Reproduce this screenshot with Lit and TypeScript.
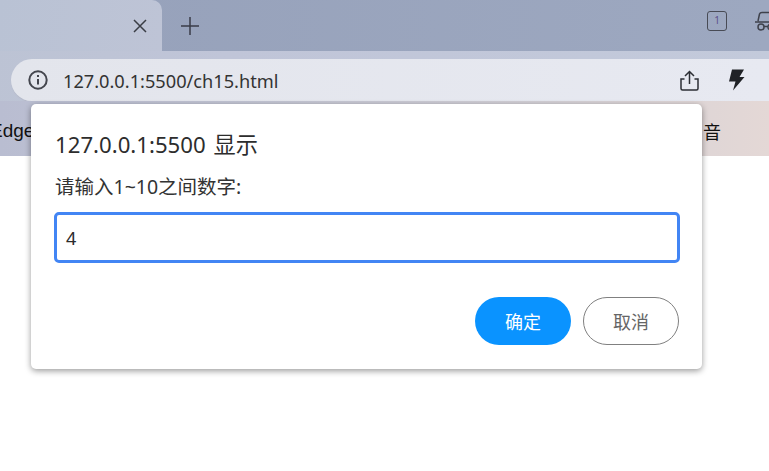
import { LitElement, html, css } from "lit";
import { customElement } from "lit/decorators.js";

@customElement("app-root")
export class AppRoot extends LitElement {
  static styles = css`
    :host {
      display: block;
      position: relative;
      width: 769px;
      height: 471px;
      overflow: hidden;
      background: #fff;
      font-family: "Noto Sans", "Noto Sans CJK SC", sans-serif;
      color: #2b2b2b;
    }
    .chrome {
      background: linear-gradient(100deg, #bcc3d4 0%, #c0c5d8 30%, #c3cadb 100%);
    }
    .tabstrip {
      height: 51px;
      display: flex;
      background: linear-gradient(90deg, #96a1ba 0%, #9da8c0 100%);
    }
    .tab {
      width: 162px;
      height: 51px;
      box-sizing: border-box;
      background: linear-gradient(100deg, #b9c2d4, #bec4d6);
      border-radius: 0 10px 0 0;
      display: flex;
      justify-content: flex-end;
      align-items: center;
      padding: 0 14px 0 0;
    }
    .tab svg { display: block; }
    .new { margin: 0 0 0 18px; align-self: center; display: block; }
    .spacer { flex: 1; }
    .win { display: flex; align-items: center; gap: 28px; height: 42px; }
    .count {
      width: 20px; height: 20px;
      box-sizing: border-box;
      border: 1.5px solid #484b55;
      border-radius: 3px;
      font-size: 10px;
      line-height: 17px;
      text-align: center;
      color: #5b4f8a;
    }
    .incog { width: 14px; height: 20px; overflow: hidden; flex: none; }
    .toolbar { height: 50px; box-sizing: border-box; padding: 8px 0 0 11px; }
    .omnibox {
      height: 42px;
      border-radius: 21px 0 0 21px;
      background: linear-gradient(90deg, #e3e5ec, #e7e9f1);
      display: flex;
      align-items: center;
      padding: 0 23px 0 17px;
      box-shadow: 0 1px 1px #b5b9c8;
    }
    .url { margin-left: 15px; color: #333; font-size: 18.2px; position: relative; top: 1px; }
    .actions { margin-left: auto; display: flex; align-items: center; gap: 29px; }
    .bookmarks {
      height: 55px;
      box-sizing: border-box;
      background: linear-gradient(90deg, #b9bdd1 0%, #c4c6d4 35%, #d3d0d6 70%, #e4d8d6 100%);
      display: flex;
      align-items: center;
      justify-content: space-between;
      font-family: "Liberation Sans", "Noto Sans CJK SC", sans-serif;
      font-size: 18px;
      color: #111;
      padding: 4px 48px 0 0;
      overflow: hidden;
    }
    .edge { margin-left: -10px; font-size: 19px; }
    .dialog {
      position: absolute;
      left: 31px;
      top: 104px;
      width: 671px;
      height: 265px;
      box-sizing: border-box;
      padding: 27px 22px 24px 23px;
      background: #fff;
      border-radius: 5px;
      box-shadow: 0 2px 6px rgba(0, 0, 0, 0.4);
      display: flex;
      flex-direction: column;
    }
    .title { font-size: 22.2px; word-spacing: 2px; line-height: 28px; color: #2d2d2d; padding-left: 1px; }
    .msg { font-size: 19.5px; line-height: 24px; margin-top: 16px; color: #333; padding-left: 1px; }
    .input {
      margin-top: 13px;
      height: 51px;
      box-sizing: border-box;
      border: 3px solid #4285f4;
      border-radius: 5px;
      display: flex;
      align-items: center;
      padding-left: 9px;
      font-size: 18px;
      color: #2b2b2b;
    }
    .buttons {
      margin-top: 34px;
      padding-right: 1px;
      display: flex;
      justify-content: flex-end;
      gap: 12px;
    }
    .btn {
      width: 96px;
      height: 48px;
      box-sizing: border-box;
      border-radius: 24px;
      display: flex;
      align-items: center;
      justify-content: center;
      font-size: 18px;
    }
    .ok { background: #0a93ff; color: #fff; }
    .cancel { border: 1px solid #808080; color: #666; }
  `;

  render() {
    return html`
      <div class="chrome">
        <div class="tabstrip">
          <div class="tab">
            <svg width="16" height="16" viewBox="0 0 16 16" fill="none" stroke="#3a3d45" stroke-width="1.5">
              <path d="M2 2 L14 14 M14 2 L2 14" />
            </svg>
          </div>
          <svg class="new" width="20" height="20" viewBox="0 0 20 20" fill="none" stroke="#3a3d48" stroke-width="1.5">
            <path d="M10 1 V19 M1 10 H19" />
          </svg>
          <div class="spacer"></div>
          <div class="win">
            <div class="count">1</div>
            <div class="incog">
              <svg width="24" height="20" viewBox="0 0 24 20" fill="none" stroke="#3f424c" stroke-width="1.5">
                <path d="M3 10 L4.500 3 Q5 1.500 7 1.500 H24 M0 11 H24" />
                <circle cx="6" cy="16" r="3" />
                <path d="M9 15.500 H13" />
                <circle cx="16" cy="16" r="3" />
              </svg>
            </div>
          </div>
        </div>
        <div class="toolbar">
          <div class="omnibox">
            <svg width="20" height="20" viewBox="0 0 20 20" fill="none" stroke="#44464e">
              <circle cx="10" cy="10" r="8.700" stroke-width="2" />
              <path d="M10 9 V14.500" stroke-width="2" />
              <path d="M10 5 V7" stroke-width="2" />
            </svg>
            <span class="url">127.0.0.1:5500/ch15.html</span>
            <div class="actions">
              <svg width="20" height="21" viewBox="0 0 20 21" fill="none" stroke="#2c2e34" stroke-width="1.500">
                <path d="M9.500 14 V1.500 M5 6 L9.500 1.500 L14 6" />
                <path d="M4.500 9 H1 V18.500 Q1 20 2.500 20 H16.500 Q18 20 18 18.500 V9 H14.500" />
              </svg>
              <svg width="17" height="22" viewBox="0 0 17 22"><path fill="#202226" d="M3 0.500 H15 L10.500 8 H15.500 L4 21.500 L6.500 12.500 H0 Z" /></svg>
            </div>
          </div>
        </div>
      </div>
      <div class="bookmarks"><span class="edge">Edge</span><span>音</span></div>
      <div class="dialog">
        <div class="title">127.0.0.1:5500 显示</div>
        <div class="msg">请输入1~10之间数字:</div>
        <div class="input">4</div>
        <div class="buttons">
          <div class="btn ok">确定</div>
          <div class="btn cancel">取消</div>
        </div>
      </div>
    `;
  }
}
